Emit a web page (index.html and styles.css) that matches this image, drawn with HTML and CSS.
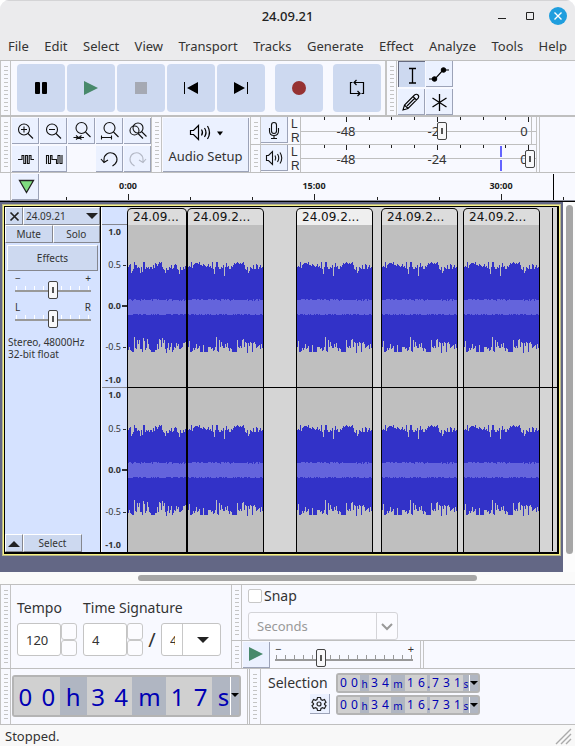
FILE: index.html
```html
<!DOCTYPE html>
<html lang="en">
<head>
<meta charset="utf-8">
<title>24.09.21</title>
<link rel="stylesheet" href="styles.css">
</head>
<body>
<div class="window">
  <header class="header">
    <div class="titlebar">
      <h1 class="title">24.09.21</h1>
      <div class="winbuttons">
        <button class="winbutton" aria-label="Minimize"><svg width="18" height="18"><path d="M5 11.5h8" stroke="#222" stroke-width="1"/></svg></button>
        <button class="winbutton" aria-label="Maximize"><svg width="18" height="18"><path d="M5.500 5.500h7v7h-7z" fill="none" stroke="#222" stroke-width="1"/></svg></button>
        <button class="winbutton" aria-label="Close"><svg width="18" height="18"><circle cx="9" cy="9" r="9" fill="#1f9ede"/><path d="M5.500 5.500l7 7M12.500 5.500l-7 7" stroke="#fff" stroke-width="1.400"/></svg></button>
      </div>
    </div>
    <nav class="menubar">
      <a href="#">File</a><a href="#">Edit</a><a href="#">Select</a><a href="#">View</a><a href="#">Transport</a><a href="#">Tracks</a><a href="#">Generate</a><a href="#">Effect</a><a href="#">Analyze</a><a href="#">Tools</a><a href="#">Help</a>
    </nav>
  </header>

  <section class="toolrow toolrow-transport">
    <div class="grip"></div>
    <div class="transport">
      <button class="big" aria-label="Pause"><svg width="48" height="48"><rect x="18" y="18" width="5" height="12" rx="1"/><rect x="25" y="18" width="5" height="12" rx="1"/></svg></button>
      <button class="big" aria-label="Play"><svg width="48" height="48"><path d="M17 17v14l14-7z" fill="#48896b"/></svg></button>
      <button class="big" aria-label="Stop"><svg width="48" height="48"><path d="M18 18h12v12h-12z" fill="#a5a9b3"/></svg></button>
      <button class="big" aria-label="Skip to start"><svg width="48" height="48"><path d="M17 18h1v12h-1zM31 18v12l-11-6z"/></svg></button>
      <button class="big" aria-label="Skip to end"><svg width="48" height="48"><path d="M17 18v12l11-6zM30 18h1v12h-1z"/></svg></button>
      <button class="big big-apart" aria-label="Record"><svg width="48" height="48"><circle cx="24" cy="24" r="7" fill="#963232"/></svg></button>
      <button class="big big-apart" aria-label="Loop"><svg width="48" height="48" fill="none" stroke="#000" stroke-width="1.200"><path d="M19.500 18.500h-2v11h9M24.500 27l2.500 2.500-2.500 2.500M28.500 29.500h2v-11h-9M23.500 16l-2.500 2.500 2.500 2.500"/></svg></button>
    </div>
    <div class="grip grip-after"></div>
    <div class="toolgrid edit-tools">
      <button class="tool tool-on" aria-label="Selection tool"><svg width="26" height="26" fill="none" stroke="#000" stroke-width="1.300"><path d="M13.500 6.500v14M10 6.500h7M10 21h7"/></svg></button>
      <button class="tool" aria-label="Envelope tool"><svg width="26" height="26" stroke="#000"><path d="M3 18h6l8-9h6" fill="none" stroke-width="1.200"/><circle cx="8.500" cy="18" r="2.300"/><circle cx="17.500" cy="9" r="2.300"/></svg></button>
      <button class="tool" aria-label="Draw tool"><svg width="26" height="26" fill="none" stroke="#000" stroke-width="1.100"><path d="M5 21l1.500-5L16.500 6q2-1.500 3.500 0t0 3.500L10 19.500zM6.500 16l3.500 3.500M15 7.500l3.500 3.500M9 17l8-8"/></svg></button>
      <button class="tool" aria-label="Multi-tool"><svg width="26" height="26" stroke="#000" stroke-width="1.300"><path d="M13.500 5v17M6.500 9l14 9M20.500 9l-14 9"/></svg></button>
    </div>
  </section>

  <section class="toolrow toolrow-edit">
    <div class="grip"></div>
    <div class="toolgrid zoom-tools">
      <button class="tool" aria-label="Zoom in"><svg width="26" height="26" class="line"><circle cx="12" cy="11.500" r="5.500"/><path d="M16 15.500l5 5M9 11.500h6M12 8.500v6"/></svg></button>
      <button class="tool" aria-label="Zoom out"><svg width="26" height="26" class="line"><circle cx="12" cy="11.500" r="5.500"/><path d="M16 15.500l5 5M9 11.500h6"/></svg></button>
      <button class="tool" aria-label="Zoom to selection"><svg width="26" height="26" class="line"><circle cx="13.500" cy="10" r="5.500"/><path d="M17.500 14l5 5M5.500 19.500h4.500M16 19.500h-4.500M8 17.500l2.500 2-2.500 2M13.500 17.500l-2.500 2 2.500 2"/></svg></button>
      <button class="tool" aria-label="Fit project"><svg width="26" height="26" class="line"><circle cx="13.500" cy="10" r="5.500"/><path d="M17.500 14l5 5M5.500 17.500v4M15.500 17.500v4M5.500 19.500h10"/></svg></button>
      <button class="tool" aria-label="Zoom toggle"><svg width="26" height="26" class="line"><circle cx="14" cy="10" r="5"/><circle cx="10.500" cy="12.500" r="4.500"/><path d="M17.500 13.500l5 5M14 15.500l5 5"/></svg></button>
      <button class="tool" aria-label="Trim"><svg width="26" height="26" class="line"><path d="M6 13.500h4v-4h1.800v8h1.800v-8h1.800v8h1.800v-8h1.800v4h3"/></svg></button>
      <button class="tool" aria-label="Silence"><svg width="26" height="26" class="line"><path d="M6.500 18v-8.500h2v8h2v-8h1.500v4h4.500v4h1.500v-8h2v8h2v-8.500"/></svg></button>
      <button class="tool tool-undo" aria-label="Undo"><svg width="26" height="26" class="line"><path d="M8 16v-2.500a6.500 6.500 0 1 1 11 4.500l-2.500 2M5 13l3 3.500 4-2.500"/></svg></button>
      <button class="tool" aria-label="Redo" disabled><svg width="26" height="26" class="line line-off"><path d="M19 16v-2.500a6.500 6.500 0 1 0-11 4.500l2.500 2M22 13l-3 3.500-4-2.500"/></svg></button>
    </div>
    <div class="grip"></div>
    <button class="audio-setup">
      <svg width="40" height="20" fill="none" stroke="#000" stroke-width="1.200"><path d="M4.500 7.500h3l5-5v14l-5-5h-3zM15.500 6.500q2 3 0 6M18.500 5q3 4.500 0 9M21.500 3q4 6.500 0 13"/><path d="M31 8.500h6l-3 4z" fill="#000" stroke="none"/></svg>
      <span>Audio Setup</span>
    </button>
    <div class="meters">
      <div class="meter-row">
        <div class="grip"></div>
        <button class="tool" aria-label="Record meter"><svg width="26" height="26" class="line"><rect x="10.500" y="5.500" width="5" height="11" rx="2.500"/><path d="M8.500 11v3q0 4.500 4.500 4.500t4.500-4.500v-3M13 18.500v2.500M10 21.500h6"/></svg></button>
        <div class="lr"><span>L</span><span>R</span></div>
        <div class="meter">
          <svg class="scale" width="236" height="27">
            <path d="M0 14.500h236M0.500 0v27M231.500 0v27" stroke="#bfbfbf" fill="none"/>
            <path d="M24.500 0v3M46.500 0v5M69.500 0v3M91.500 0v3M114.500 0v3M137.500 0v5M160.500 0v3M183.500 0v3M205.500 0v3M228.500 0v5" stroke="#222"/>
            <text x="46" y="19" text-anchor="middle">-48</text><text x="137" y="19" text-anchor="middle">-24</text><text x="224" y="19" text-anchor="middle">0</text>
          </svg>
          <input type="range" class="slider meter-slider" aria-label="Recording level" max="1000" value="606">
        </div>
      </div>
      <div class="meter-row">
        <div class="grip"></div>
        <button class="tool" aria-label="Playback meter"><svg width="26" height="26" class="line"><path d="M5.500 10.500h2l4-4v13l-4-4h-2zM14 10.500q1.500 2.500 0 5M16.500 9q2.500 4 0 8M19 7.500q3.500 5.500 0 11"/></svg></button>
        <div class="lr"><span>L</span><span>R</span></div>
        <div class="meter">
          <svg class="scale" width="236" height="27">
            <path d="M0 13.500h236M0.500 0v27" stroke="#bfbfbf" fill="none"/>
            <path d="M24.500 0v3M46.500 0v5M69.500 0v3M91.500 0v3M114.500 0v3M137.500 0v5M160.500 0v3M183.500 0v3M205.500 0v3M228.500 0v5" stroke="#222"/>
            <path d="M201 1v11M201 15v11" stroke="#6464ff" stroke-width="2"/>
            <text x="46" y="19" text-anchor="middle">-48</text><text x="137" y="19" text-anchor="middle">-24</text><text x="224" y="19" text-anchor="middle">0</text>
          </svg>
          <input type="range" class="slider meter-slider" aria-label="Playback level" max="1000" value="996">
        </div>
      </div>
    </div>
    <div class="toolrow-end"></div>
  </section>

  <section class="timeline">
    <div class="timeline-stub"></div>
    <button class="tool" aria-label="Pinned play head"><svg width="26" height="26"><path d="M7.500 6.500h14l-7 12z" fill="#7fdc7f" stroke="#222" stroke-width="1.300"/></svg></button>
    <svg class="ruler" width="535" height="27">
      <path d="M27.500 24v3M89.500 21v6M151.500 24v3M213.500 24v3M275.500 21v6M338.500 24v3M400.500 24v3M462.500 21v6M524.500 24v3" stroke="#222"/>
      <path d="M514.500 1v26" stroke="#000"/>
      <text x="89" y="16" text-anchor="middle">0:00</text><text x="275" y="16" text-anchor="middle">15:00</text><text x="462" y="16" text-anchor="middle">30:00</text>
    </svg>
  </section>

  <main class="project">
    <div class="canvas">
      <article class="track">
        <div class="panel">
          <div class="panel-row name-row">
            <button class="flat" aria-label="Close track"><svg width="16" height="16"><path d="M4.500 4.500l8 8M12.500 4.500l-8 8" stroke="#222" stroke-width="1.700"/></svg></button>
            <button class="flat name"><span>24.09.21</span><svg width="12" height="8"><path d="M0 1h12l-6 6z" fill="#222"/></svg></button>
          </div>
          <div class="panel-row"><button class="flat">Mute</button><button class="flat">Solo</button></div>
          <button class="flat effects">Effects</button>
          <div class="fader">
            <div class="ends"><span>−</span><span>+</span></div>
            <input type="range" class="slider fader-slider" aria-label="Gain">
          </div>
          <div class="fader">
            <div class="ends"><span>L</span><span>R</span></div>
            <input type="range" class="slider fader-slider" aria-label="Pan">
          </div>
          <p class="format">Stereo, 48000Hz<br>32-bit float</p>
          <div class="panel-foot">
            <button class="flat" aria-label="Collapse"><svg width="16" height="16"><path d="M2 12h12l-6-6z" fill="#222"/></svg></button>
            <button class="flat">Select</button>
          </div>
        </div>
        <div class="vruler">
          <div class="vruler-head"></div>
          <div class="vscale"><b>1.0</b><span class="tick">0.5</span><b class="tick zero">0.0</b><span class="tick">-0.5</span><b>-1.0</b></div>
          <div class="vscale vscale-second"><b>1.0</b><span class="tick">0.5</span><b class="tick zero">0.0</b><span class="tick">-0.5</span><b>-1.0</b></div>
        </div>
        <div class="lanes">
          <section class="clip clip-1" data-wave="short"><h2>24.09...</h2><div class="channel"></div><div class="channel"></div></section>
          <section class="clip clip-2" data-wave="long"><h2>24.09.2...</h2><div class="channel"></div><div class="channel"></div></section>
          <section class="clip clip-3 clip-on" data-wave="long"><h2>24.09.2...</h2><div class="channel"></div><div class="channel"></div></section>
          <section class="clip clip-4" data-wave="long"><h2>24.09.2...</h2><div class="channel"></div><div class="channel"></div></section>
          <section class="clip clip-5" data-wave="long"><h2>24.09.2...</h2><div class="channel"></div><div class="channel"></div></section>
          <div class="playhead"></div>
        </div>
      </article>
    </div>
    <div class="vscroll"><div class="vthumb"></div></div>
  </main>
  <div class="hscroll"><div class="hthumb"></div></div>

  <section class="bottom-top">
    <div class="grip"></div>
    <form class="signature">
      <div class="field">
        <label for="tempo">Tempo</label>
        <div class="spin"><input id="tempo" type="text" value="120"><div class="steps"><button type="button" aria-label="Tempo up"></button><button type="button" aria-label="Tempo down"></button></div></div>
      </div>
      <div class="field">
        <label for="upper">Time Signature</label>
        <div class="sig">
          <div class="spin"><input id="upper" class="upper" type="text" value="4"><div class="steps"><button type="button" aria-label="Beats up"></button><button type="button" aria-label="Beats down"></button></div></div>
          <span class="slash">/</span>
          <div class="combo"><select aria-label="Beat unit"><option>4</option></select><svg width="38" height="32"><path d="M0.500 0v32" stroke="#c8c8c8"/><path d="M15 13h12l-6 6z" fill="#222"/></svg></div>
        </div>
      </div>
    </form>
    <div class="stack">
      <div class="stack-row snap-row">
        <div class="grip"></div>
        <div class="snap">
          <label class="check"><input type="checkbox">Snap</label>
          <div class="combo combo-snap"><select aria-label="Snap to" disabled><option>Seconds</option></select><svg width="21" height="26"><path d="M0.500 0v26" stroke="#d4d4d8"/><path d="M6 11l5 5 5-5" fill="none" stroke="#999" stroke-width="2"/></svg></div>
        </div>
      </div>
      <div class="stack-row">
        <div class="grip"></div>
        <button class="tool speed-play" aria-label="Play at speed"><svg width="26" height="26"><path d="M6 5v14l14-7z" fill="#48896b"/></svg></button>
        <div class="speed">
          <div class="ends"><span>−</span><span>+</span></div>
          <input type="range" class="slider speed-slider" aria-label="Playback speed" value="32">
        </div>
        <div class="speed-end"></div>
      </div>
    </div>
  </section>

  <section class="bottom-time">
    <div class="grip"></div>
    <div class="clock clock-big">
      <span class="digits"><i>0</i><i>0</i></span><span class="unit">h</span><span class="digits"><i>3</i><i>4</i></span><span class="unit unit-m">m</span><span class="digits"><i>1</i><i>7</i></span><span class="unit unit-s">s</span>
      <button class="clock-menu" aria-label="Time format"><svg width="8" height="5"><path d="M0 0h8l-4 4z"/></svg></button>
    </div>
    <div class="grip grip-gap"></div>
    <div class="selection">
      <div class="sel-label"><span>Selection</span>
        <button class="tool gear" aria-label="Selection options"><svg width="18" height="18" fill="none" stroke="#222" stroke-width="1.200"><circle cx="9" cy="9" r="2"/><path d="M7.500 2.500h3l.5 2 1.500.8 2-.8 1.500 2.800-1.500 1.200v1l1.500 1.200-1.500 2.800-2-.8-1.500.8-.5 2h-3l-.5-2-1.500-.8-2 .8-1.500-2.800 1.500-1.200v-1l-1.500-1.200 1.500-2.800 2 .8 1.500-.8z"/></svg></button>
      </div>
      <div class="sel-times">
        <div class="clock clock-small"><span class="digits"><i>0</i><i>0</i></span><span class="unit">h</span><span class="digits"><i>3</i><i>4</i></span><span class="unit unit-m">m</span><span class="digits"><i>1</i><i>6</i></span><span class="unit dot">.</span><span class="digits"><i>7</i><i>3</i><i>1</i></span><span class="unit unit-s">s</span><button class="clock-menu" aria-label="Start format"><svg width="8" height="5"><path d="M0 0h8l-4 4z"/></svg></button></div>
        <div class="clock clock-small"><span class="digits"><i>0</i><i>0</i></span><span class="unit">h</span><span class="digits"><i>3</i><i>4</i></span><span class="unit unit-m">m</span><span class="digits"><i>1</i><i>6</i></span><span class="unit dot">.</span><span class="digits"><i>7</i><i>3</i><i>1</i></span><span class="unit unit-s">s</span><button class="clock-menu" aria-label="End format"><svg width="8" height="5"><path d="M0 0h8l-4 4z"/></svg></button></div>
      </div>
    </div>
  </section>

  <footer class="status"><span>Stopped.</span><svg width="18" height="18"><path d="M2 17L17 2M7 17L17 7M12 17l5-5" stroke="#aaa" stroke-width="1.400"/></svg></footer>
</div>
<script src="waves.js"></script>
</body>
</html>
```
FILE: styles.css
```css
* { box-sizing: border-box; }
html { background: #fff; }
body { margin: 0; font: 13px/18px "Noto Sans", "Open Sans", sans-serif; color: #333; }
button, input, select { font: inherit; color: inherit; margin: 0; padding: 0; border: 0; border-radius: 0; background: none; }
svg { display: block; flex: none; }
i { font-style: normal; }

.window { display: flex; flex-direction: column; min-height: 100vh; background: #f8f9ff; border-radius: 9px 9px 0 0; overflow: hidden; }

.header { background: #ebebed; border-bottom: 1px solid #bfbfbf; box-shadow: inset 0 1px 0 #d4d4d6; }
.titlebar { display: grid; grid-template-columns: 1fr auto 1fr; align-items: center; height: 32px; padding: 0 8px; }
.title { grid-column: 2; margin: 0; font-size: 13px; font-weight: 500; color: #222; }
.winbuttons { display: flex; gap: 10px; justify-content: flex-end; }
.winbutton { width: 18px; height: 18px; }
.menubar { display: flex; justify-content: space-between; align-items: center; height: 28px; padding: 0 8px; }
.menubar a { color: #333; text-decoration: none; }

.grip { flex: none; width: 11px; border: solid #c4c4c4; border-width: 0 1px; background: repeating-linear-gradient(#c4c4c4 0 1px, transparent 1px 4px) 3px 5px / 4px calc(100% - 9px) no-repeat; }

.toolrow { display: flex; }
.toolrow-transport { height: 56px; border-bottom: 2px solid #bfbfbf; }
.transport { display: flex; gap: 2px; padding: 3px 4px 0 6px; }
.big { width: 48px; height: 48px; border-radius: 4px; background: #cdd9f0; }
.big-apart { margin-left: 8px; }
.grip-after { width: 12px; border-left-width: 2px; }
.toolgrid { display: grid; grid-auto-rows: 26px; gap: 2px 1px; align-content: start; }
.edit-tools { grid-template-columns: repeat(2, 27px); padding-left: 1px; }
.zoom-tools { grid-template-columns: repeat(5, 27px); padding: 1px 0 0 1px; }
.tool { flex: none; width: 27px; height: 26px; background: #ebf1ff; border: solid #9ca3b8; border-width: 0 1px 1px 0; overflow: hidden; }
.tool-on { background: #cdd9f0; border-color: #666b80; border-width: 1px 0 0 1px; }
.tool-undo { grid-column: 4; }
.line { fill: none; stroke: #111; stroke-width: 1.100; }
.line-off { stroke: #b4b9c6; }

.toolrow-edit { height: 56px; border-bottom: 1px solid #bfbfbf; }
.audio-setup { display: flex; flex-direction: column; align-items: center; justify-content: space-between; width: 86px; margin: 1px 1px 0; padding: 5px 0 6px; background: #ebf1ff; border: solid #9ca3b8; border-width: 0 1px 1px 0; }
.meters { display: grid; grid-template-rows: 27px 1px 27px; }
.meter-row { display: flex; }
.meter-row:first-child { grid-row: 1; box-shadow: 0 1px 0 #bfbfbf; }
.meter-row:last-child { grid-row: 3; }
.lr { display: flex; flex-direction: column; width: 12px; padding-left: 3px; font: 12px/14px "Liberation Sans", sans-serif; }
.meter { position: relative; }
.scale text { font-size: 13px; fill: #333; }
.meter-slider { position: absolute; left: 0; top: 0; width: 100%; height: 27px; }
.toolrow-end { width: 4px; border: solid #c4c4c4; border-width: 0 1px; }

.slider { -webkit-appearance: none; appearance: none; display: block; }
.slider::-webkit-slider-thumb { -webkit-appearance: none; width: 10px; height: 18px; border: 1px solid #444; border-radius: 2px; background: linear-gradient(#555, #555) center / 2px 6px no-repeat, #f8f8fa; }

.timeline { display: flex; height: 29px; border-bottom: 1px solid #000; box-shadow: inset 0 -1px 0 #8d8f9c; overflow: hidden; }
.timeline-stub { width: 11px; border-right: 1px solid #c4c4c4; }
.timeline .tool { margin: 1px 0 0 1px; }
.ruler text { font-size: 9px; font-weight: 700; fill: #222; }

.project { display: flex; background: #fcfcfc; }
.canvas { flex: 1; min-width: 0; padding: 4px 4px 18px; background: #636785; }
.track { display: flex; border: 1px solid #000; border-width: 1px 2px 2px 1px; box-shadow: 0 0 0 1px #f8f284, 0 0 0 2px #b9b88c; background: #d5e2ff; font-size: 10px; line-height: 12px; }
.panel { display: flex; flex-direction: column; flex: none; width: 96px; border-right: 1px solid #000; }
.panel-row { display: grid; grid-template-columns: 1fr 1fr; grid-auto-rows: 18px; }
.name-row { grid-template-columns: 18px 1fr; }
.flat { display: flex; align-items: center; justify-content: center; background: #cdd9f0; border: 1px solid; border-color: #fff #85878f #85878f #fff; }
.name { justify-content: space-between; padding: 0 1px 0 2px; }
.effects { height: 26px; margin: 2px 2px 0; }
.fader { padding: 4px 9px 0 10px; }
.ends { display: flex; justify-content: space-between; height: 6px; line-height: 6px; }
.fader-slider { width: 76px; height: 20px; margin-top: -1px; background: linear-gradient(#999, #999) 0 10px / 100% 2px no-repeat, repeating-linear-gradient(90deg, #fff 0 1px, transparent 1px 9px) 1px 6px / 75px 4px no-repeat; }
.format { margin: 7px 3px 0; }
.panel-foot { display: grid; grid-template-columns: 18px 59px; grid-auto-rows: 18px; margin-top: auto; }

.vruler { flex: none; width: 26px; font-size: 9px; text-align: right; border-left: 1px solid #fff; }
.vruler-head { height: 18px; border-bottom: 1px solid #85878f; }
.vscale { display: grid; grid-template-rows: 14px 1fr 30px 1fr 14px; align-items: center; height: 162px; padding-right: 6px; }
.vscale-second { height: 165px; border-top: 1px solid #85878f; }
.tick { position: relative; }
.tick::after { content: ""; position: absolute; right: -5px; top: 6px; width: 3px; height: 1px; background: #333; }
.zero::after { right: -6px; width: 5px; height: 2px; top: 5px; }

.lanes { position: relative; flex: 1; min-width: 0; display: grid; grid-template-columns: 60px 77px 32px 77px 8px 77px 5px 77px 1fr 5px; padding-top: 1px; background: #d5d5d5; overflow: hidden; }
.lanes::after { content: ""; position: absolute; left: 0; right: 0; top: 180px; height: 1px; background: #000; }
.clip { display: grid; grid-template-rows: 17px 163px 164px; border: solid #000; border-width: 0 1px; border-radius: 5px 5px 0 0; background: #bfbfbf; overflow: hidden; box-shadow: inset 0 1px 0 #000; }
.clip-1 { grid-column: 1; }
.clip-2 { grid-column: 2; }
.clip-3 { grid-column: 4; }
.clip-4 { grid-column: 6; }
.clip-5 { grid-column: 8; }
.clip h2 { margin: 0; padding-left: 5px; background: #dcdcdc; border: 1px solid #000; border-width: 1px 0 0; border-radius: 4px 4px 0 0; font: 12px/17px "DejaVu Sans", sans-serif; color: #111; white-space: nowrap; }
.clip-on h2 { background: #efefef; }
.channel { display: flex; align-items: center; }
.wave-peak { fill: #3232c8; }
.wave-rms { fill: #6464dc; }
.playhead { grid-column: 10; width: 1px; height: 343px; background: #000; }

.vscroll { width: 12px; padding: 3px 2px 18px 3px; }
.vthumb { height: 100%; border-radius: 4px; background: #a6a6a6; }
.hscroll { height: 12px; padding: 3px 0 3px; background: #fafafa; }
.hthumb { width: 59%; height: 6px; margin-left: 24%; border-radius: 3px; background: #a6a6a6; }

.bottom-top { display: flex; border-top: 1px solid #bfbfbf; }
.signature { display: flex; gap: 6px; padding: 14px 10px 12px 6px; font-size: 14px; }
.field { display: flex; flex-direction: column; gap: 6px; }
.spin { display: flex; }
.spin input { width: 44px; height: 33px; padding: 0 8px; border: 1px solid #c4c4c4; border-radius: 3px; background: #fff; font-size: 13px; }
.steps { display: grid; width: 16px; }
.steps button { border: 1px solid #c8c8c8; border-radius: 3px; background: #fcfcff; }
.sig { display: flex; align-items: center; }
.slash { width: 18px; text-align: center; font-size: 20px; }
.combo { position: relative; width: 60px; height: 33px; border: 1px solid #c4c4c4; border-radius: 3px; background: #fff; overflow: hidden; }
.combo select { -webkit-appearance: none; appearance: none; width: 13px; height: 100%; padding-left: 8px; font-size: 13px; overflow: hidden; }
.combo svg { position: absolute; right: 0; top: 0; pointer-events: none; }
.stack { flex: 1; display: flex; flex-direction: column; }
.stack-row { display: flex; flex: 1; }
.snap-row { flex: none; height: 56px; border-bottom: 1px solid #bfbfbf; }
.snap { padding: 2px 6px; }
.check { display: flex; align-items: center; gap: 2px; font-size: 14px; line-height: 18px; }
.check input { -webkit-appearance: none; appearance: none; width: 14px; height: 14px; border: 1px solid #c8c8c8; border-radius: 2px; background: #fff; }
.combo-snap { width: 150px; height: 28px; margin-top: 7px; border-color: #d4d4d8; background: #fbfbff; color: #999; }
.combo-snap select { width: 100%; color: #999; opacity: 1; }
.speed-play { margin: 1px 0 0 1px; }
.speed { width: 150px; padding: 4px 6px 0 5px; }
.speed-slider { width: 138px; height: 20px; margin-top: -5px; background: linear-gradient(#999, #999) 0 11px / 100% 2px no-repeat, repeating-linear-gradient(90deg, #999 0 1px, transparent 1px 9px) 1px 7px / 137px 4px no-repeat; }
.speed .ends { height: 8px; line-height: 8px; font-size: 11px; }
.speed-end { width: 4px; border: solid #c4c4c4; border-width: 0 1px; }

.bottom-time { display: flex; height: 57px; border: solid #bfbfbf; border-width: 1px 0; }
.clock { display: flex; color: #0000b4; background: #b0b6c2; border-radius: 3px; }
.digits { display: flex; background: #d0d0d0; }
.digits i { flex: 1; text-align: center; }
.unit { text-align: center; }
.clock-menu { display: flex; align-items: center; justify-content: center; margin-left: auto; border-left: 1px solid #fff; }
.clock-big { width: 229px; height: 42px; margin: 6px 6px 0 1px; border: 2px solid #b4b4b4; font-size: 24px; line-height: 40px; }
.clock-big .digits { width: 46px; }
.clock-big .unit { width: 27px; }
.clock-big .unit-m { width: 34px; }
.clock-big .unit-s { width: 18px; padding-left: 5px; }
.clock-big .clock-menu { width: 9px; padding-bottom: 2px; }
.grip-gap { width: 14px; border-left: 3px double #bfbfbf; }
.selection { display: flex; gap: 6px; padding: 4px 7px; }
.sel-label { display: flex; flex-direction: column; align-items: flex-end; justify-content: space-between; width: 62px; font-size: 14px; }
.sel-label span { align-self: flex-start; line-height: 20px; }
.gear { width: 20px; height: 20px; margin-bottom: 6px; }
.sel-times { display: flex; flex-direction: column; gap: 2px; }
.clock-small { width: 144px; height: 20px; border: 2px solid #b4b4b4; font-size: 12px; line-height: 16px; }
.clock-small .digits { width: 22px; }
.clock-small .unit { width: 9px; font-size: 10px; line-height: 19px; }
.clock-small .unit-m { width: 14px; }
.clock-small .unit.dot { width: 3px; font-size: 12px; line-height: 17px; }
.clock-small .dot + .digits { width: 33px; }
.clock-small .unit-s { width: 6px; }
.clock-small .clock-menu { width: 9px; }

.status { display: flex; flex: 1; justify-content: space-between; padding: 2px 3px 0 5px; background: #f8f8f8; }
```
FILE: waves.js
```js
// Peak insets in pixels, one per column: distance from the loudest level.
const waves = {
  short: {
    top: [5,3,2,11,9,7,0,3,3,6,5,6,11,5,10,0,0,7,5,6,5,7,5,5,7,3,6,1,2,4,2,0,1,0,5,7,8,11,6,8,8,5,6,3,7,6,3,2,3,7,8,12,5,8,8,5,7,4],
    bottom: [2,5,2,1,0,0,15,4,3,12,8,12,3,3,0,14,11,2,4,13,8,3,2,0,0,0,0,2,2,8,3,13,12,5,14,9,12,3,-1,4,9,2,5,9,0,2,5,4,9,6,8,3,3,4,5,9,9,10]
  },
  long: {
    top: [5,4,5,0,6,3,2,1,1,1,2,0,3,3,4,2,3,4,5,4,2,5,4,6,0,7,12,5,0,0,5,7,7,5,6,3,14,5,1,5,4,7,7,4,5,3,1,2,1,0,1,2,1,2,1,0,3,7,8,5,11,9,5,6,7,3,7,7,2,3,7,5,3,6,5],
    bottom: [5,11,0,0,1,4,2,4,8,3,4,6,0,0,0,7,0,0,0,0,5,5,5,3,4,1,2,5,15,1,0,12,5,10,6,4,4,8,5,9,4,1,4,3,0,0,0,0,0,12,5,4,6,4,12,13,5,10,9,-1,9,6,10,9,0,9,10,8,4,5,6,7,3,8,4]
  }
};
const NS = "http://www.w3.org/2000/svg";

function outline(top, bottom) {
  const n = top.length;
  let d = "M0 45";
  for (let x = 0; x < n; x++) d += "V" + top[x] + "H" + (x + 1);
  for (let x = n - 1; x >= 0; x--) d += "V" + bottom[x] + "H" + x;
  return d + "Z";
}

function addPath(svg, name, d) {
  const path = document.createElementNS(NS, "path");
  path.setAttribute("class", name);
  path.setAttribute("d", d);
  svg.append(path);
}

document.querySelectorAll(".clip").forEach(clip => {
  const wave = waves[clip.dataset.wave];
  clip.querySelectorAll(".channel").forEach(channel => {
    const svg = document.createElementNS(NS, "svg");
    svg.setAttribute("width", wave.top.length);
    svg.setAttribute("height", 92);
    addPath(svg, "wave-peak", outline(wave.top.map(v => v + 1), wave.bottom.map(v => 91 - v)));
    addPath(svg, "wave-rms", outline(
      wave.top.map((v, i) => 38 + (v * 3 + i) % 2 + (v > 6 ? 1 : 0)),
      wave.bottom.map((v, i) => 54 - (v + i) % 2)));
    channel.append(svg);
  });
});
```
